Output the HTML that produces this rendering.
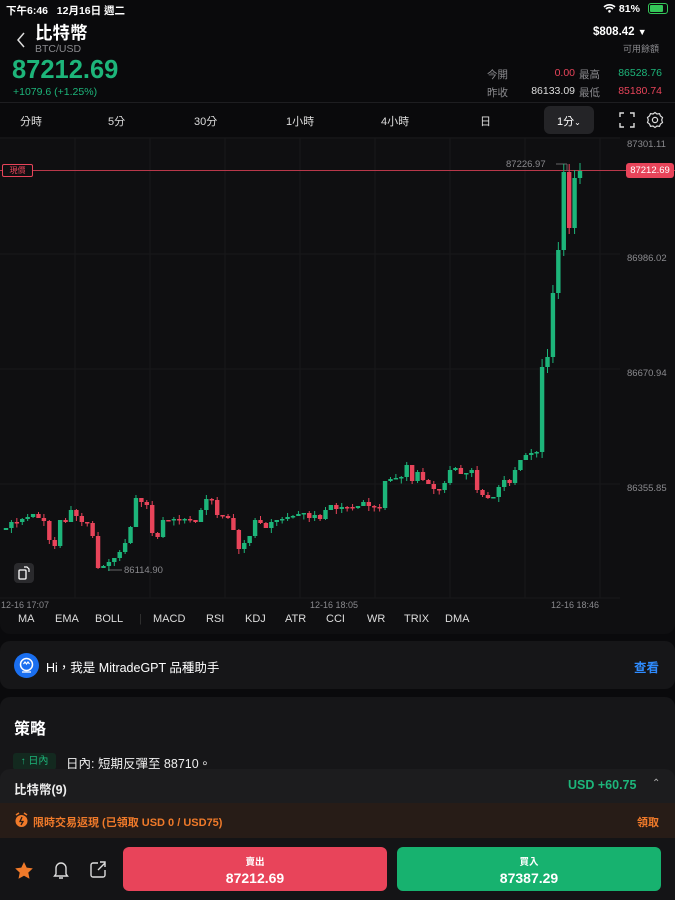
<!DOCTYPE html>
<html><head><meta charset="utf-8">
<style>
*{margin:0;padding:0;box-sizing:border-box}
body{width:675px;height:900px;overflow:hidden;background:#0a0a0c;font-family:"Liberation Sans","Noto Sans CJK TC",sans-serif;color:#fff;position:relative}
.a{position:absolute;white-space:nowrap}
.g{color:#1db57a}.r{color:#e8445a}.gr{color:#8a8a8e}
</style></head><body>
<!-- status -->
<div class="a" style="left:6px;top:3px;font-size:10.5px;font-weight:bold">下午6:46&nbsp;&nbsp; 12月16日 週二</div>
<div class="a" style="left:603px;top:3px;font-size:10.5px;font-weight:bold">
<svg width="13" height="10" viewBox="0 0 13 10" style="vertical-align:-1px"><path d="M1 4a8 8 0 0 1 11 0M3 6a5 5 0 0 1 7 0" stroke="#fff" stroke-width="1.6" fill="none"/><circle cx="6.5" cy="8.3" r="1.3" fill="#fff"/></svg> 81%</div>
<div class="a" style="left:648px;top:3px;width:20px;height:11px;border:1px solid #34c759;border-radius:3px;padding:1px"><div style="width:80%;height:100%;background:#34c759;border-radius:1px"></div></div>
<!-- header -->
<svg class="a" style="left:15px;top:31px" width="12" height="18"><path d="M9 2L3 9l6 7" stroke="#ddd" stroke-width="1.5" fill="none"/></svg>
<div class="a" style="left:35px;top:20px;font-size:17.5px;font-weight:bold">比特幣</div>
<div class="a gr" style="left:35px;top:43px;font-size:10.5px">BTC/USD</div>
<div class="a" style="left:593px;top:26px;font-size:11.5px;font-weight:bold">$808.42 <span style="font-size:9px">▼</span></div>
<div class="a gr" style="left:623px;top:42px;font-size:9px">可用餘額</div>
<div class="a g" style="left:12px;top:56px;font-size:25.5px;font-weight:bold">87212.69</div>
<div class="a g" style="left:13px;top:86px;font-size:10.5px">+1079.6 (+1.25%)</div>
<div class="a gr" style="left:487px;top:67px;font-size:10.5px">今開</div>
<div class="a r" style="right:100px;top:67px;font-size:10.5px">0.00</div>
<div class="a gr" style="left:579px;top:67px;font-size:10.5px">最高</div>
<div class="a g" style="right:13px;top:67px;font-size:10.5px">86528.76</div>
<div class="a gr" style="left:487px;top:85px;font-size:10.5px">昨收</div>
<div class="a" style="right:100px;top:85px;font-size:10.5px;color:#ddd">86133.09</div>
<div class="a gr" style="left:579px;top:85px;font-size:10.5px">最低</div>
<div class="a r" style="right:13px;top:85px;font-size:10.5px">85180.74</div>
<div class="a" style="left:0;top:102px;width:675px;height:1px;background:#1e1e21"></div>
<!-- tabs -->
<div class="a" style="left:544px;top:106px;width:50px;height:28px;background:#242427;border-radius:6px"></div>
<div class="a" style="left:0;top:113px;width:675px;font-size:11px;color:#ddd">
<span class="a" style="left:20px">分時</span><span class="a" style="left:108px">5分</span><span class="a" style="left:194px">30分</span><span class="a" style="left:286px">1小時</span><span class="a" style="left:381px">4小時</span><span class="a" style="left:480px">日</span><span class="a" style="left:557px;color:#fff">1分<span style="font-size:8px">⌄</span></span></div>
<svg class="a" style="left:619px;top:112px" width="16" height="16"><path d="M1 5V1h4M11 1h4v4M15 11v4h-4M5 15H1v-4" stroke="#ddd" stroke-width="1.4" fill="none"/></svg>
<svg class="a" style="left:646px;top:111px" width="18" height="18" viewBox="0 0 18 18"><path d="M9 1.5l2 1.5 2.5-.3 1 2.3 2 1.5-.8 2.5.8 2.5-2 1.5-1 2.3-2.5-.3-2 1.5-2-1.5-2.5.3-1-2.3-2-1.5.8-2.5-.8-2.5 2-1.5 1-2.3 2.5.3z" stroke="#ddd" stroke-width="1.2" fill="none"/><circle cx="9" cy="9" r="2.6" stroke="#ddd" stroke-width="1.2" fill="none"/></svg>
<!-- chart -->
<div class="a" style="left:0;top:137px;width:675px;height:497px;background:#0f0f11;border-radius:0 0 10px 10px"></div>
<svg class="a" id="ch" style="left:0;top:0" width="675" height="640"></svg>
<div class="a" style="left:2px;top:164px;width:31px;height:13px;border:1px solid #e8445a;border-radius:2px;font-size:8px;color:#e8445a;text-align:center;line-height:11px;background:#0f0f11">現價</div>
<div class="a" style="left:626px;top:163px;width:48px;height:15px;background:#e8445a;border-radius:3px;font-size:9.5px;text-align:center;line-height:15px">87212.69</div>
<div class="a gr" style="left:627px;top:139px;font-size:9.5px">87301.11</div>
<div class="a gr" style="left:627px;top:253px;font-size:9.5px">86986.02</div>
<div class="a gr" style="left:627px;top:368px;font-size:9.5px">86670.94</div>
<div class="a gr" style="left:627px;top:483px;font-size:9.5px">86355.85</div>
<div class="a gr" style="left:506px;top:159px;font-size:9.5px">87226.97</div>
<div class="a gr" style="left:124px;top:565px;font-size:9.5px">86114.90</div>
<div class="a" style="left:14px;top:563px;width:20px;height:20px;background:#2a2a2d;border-radius:4px"><svg width="20" height="20"><rect x="5" y="7" width="7" height="9" rx="1" stroke="#fff" stroke-width="1.3" fill="none"/><path d="M10 4h3l2 2v3" stroke="#fff" stroke-width="1.2" fill="none"/></svg></div>
<div class="a gr" style="left:1px;top:600px;font-size:9px">12-16 17:07</div>
<div class="a gr" style="left:310px;top:600px;font-size:9px">12-16 18:05</div>
<div class="a gr" style="left:551px;top:600px;font-size:9px">12-16 18:46</div>
<div class="a" style="left:0;top:613px;font-size:11px;color:#ddd">
<span class="a" style="left:18px">MA</span><span class="a" style="left:55px">EMA</span><span class="a" style="left:95px">BOLL</span><span class="a" style="left:139px;color:#333">|</span><span class="a" style="left:153px">MACD</span><span class="a" style="left:206px">RSI</span><span class="a" style="left:245px">KDJ</span><span class="a" style="left:285px">ATR</span><span class="a" style="left:326px">CCI</span><span class="a" style="left:367px">WR</span><span class="a" style="left:404px">TRIX</span><span class="a" style="left:445px">DMA</span></div>
<!-- GPT -->
<div class="a" style="left:0;top:641px;width:675px;height:48px;background:#161618;border-radius:10px"></div>
<div class="a" style="left:14px;top:653px;width:25px;height:25px;border-radius:50%;background:#1a6ff0"><svg width="25" height="25"><circle cx="12.5" cy="11.5" r="6" stroke="#fff" stroke-width="1.5" fill="none"/><path d="M8 19h9M9.5 11l1.5-2 1.5 2 1.5-2 1.5 2" stroke="#fff" stroke-width="1.2" fill="none"/></svg></div>
<div class="a" style="left:46px;top:657px;font-size:12.5px">Hi，我是 MitradeGPT 品種助手</div>
<div class="a" style="left:634px;top:657px;font-size:12.5px;color:#2f8cff;font-weight:bold">查看</div>
<!-- strategy -->
<div class="a" style="left:0;top:697px;width:675px;height:100px;background:#161618;border-radius:10px"></div>
<div class="a" style="left:14px;top:715px;font-size:16px;font-weight:bold">策略</div>
<div class="a g" style="left:13px;top:753px;width:43px;height:17px;background:#13291f;border-radius:3px;font-size:10px;text-align:center;line-height:17px">↑ 日內</div>
<div class="a" style="left:66px;top:753px;font-size:12.5px;color:#eee">日內: 短期反彈至 88710。</div>
<!-- bottom sheet -->
<div class="a" style="left:0;top:769px;width:675px;height:35px;background:#1c1c1e;border-radius:10px 10px 0 0"></div>
<div class="a" style="left:14px;top:779px;font-size:12.5px;font-weight:bold;color:#eee">比特幣(9)</div>
<div class="a g" style="left:568px;top:778px;font-size:12.5px;font-weight:bold">USD +60.75</div>
<div class="a" style="left:652px;top:778px;font-size:10px;color:#aaa">⌃</div>
<div class="a" style="left:0;top:803px;width:675px;height:35px;background:#271c17"></div>
<svg class="a" style="left:14px;top:812px" width="15" height="16"><circle cx="7.5" cy="9" r="6" fill="#f07a2a"/><path d="M2 3l3-2M13 3l-3-2" stroke="#f07a2a" stroke-width="1.6"/><path d="M8 5L6 9.5h3L7 13" stroke="#271c17" stroke-width="1.3" fill="none"/></svg>
<div class="a" style="left:33px;top:814px;font-size:11px;color:#f07a2a;font-weight:bold">限時交易返現 (已領取 USD 0 / USD75)</div>
<div class="a" style="left:637px;top:814px;font-size:11px;color:#f07a2a;font-weight:bold">領取</div>
<div class="a" style="left:0;top:838px;width:675px;height:62px;background:#141416"></div>
<svg class="a" style="left:14px;top:861px" width="20" height="19" viewBox="0 0 20 19"><path d="M10 1l2.7 5.6 6.1.8-4.5 4.2 1.2 6.1L10 14.7l-5.5 3 1.2-6.1L1.2 7.4l6.1-.8z" fill="#f07a2a"/></svg>
<svg class="a" style="left:52px;top:860px" width="18" height="20"><path d="M4 14V8a5 5 0 0 1 10 0v6l1.5 2h-13zM7 18h4" stroke="#ddd" stroke-width="1.4" fill="none"/></svg>
<svg class="a" style="left:89px;top:860px" width="18" height="19"><path d="M9 3H4a2 2 0 0 0-2 2v10a2 2 0 0 0 2 2h10a2 2 0 0 0 2-2v-5M9 10l7-7M11 2h5v5" stroke="#ddd" stroke-width="1.4" fill="none"/></svg>
<div class="a" style="left:123px;top:847px;width:264px;height:44px;background:#e8445a;border-radius:6px;text-align:center"><div style="font-size:9.5px;margin-top:7px;font-weight:bold">賣出</div><div style="font-size:14px;font-weight:bold;margin-top:2px">87212.69</div></div>
<div class="a" style="left:397px;top:847px;width:264px;height:44px;background:#17b26f;border-radius:6px;text-align:center"><div style="font-size:9.5px;margin-top:7px;font-weight:bold">買入</div><div style="font-size:14px;font-weight:bold;margin-top:2px">87387.29</div></div>
<script>
var s='';
function L(x1,y1,x2,y2,c,w){s+='<line x1="'+x1+'" y1="'+y1+'" x2="'+x2+'" y2="'+y2+'" stroke="'+c+'" stroke-width="'+(w||1)+'"/>';}
for(var x=75;x<=600;x+=75)L(x,138,x,598,'#18181b');
[138,254,369,484,598].forEach(function(y){L(0,y,620,y,'#18181b');});
L(0,170.5,675,170.5,'#b8384a');
L(556,164,567,164,'#666');L(567,164,567,171,'#666');
L(108,570,122,570,'#666');
var c=[528,522,522,519,517,514,518,521,540,546,520,522,510,516,522,523,536,568,566,562,558,552,543,527,498,502,505,533,537,520,520,519,520,519,520,522,510,499,500,515,516,518,530,549,543,536,520,523,528,522,520,519,517,516,514,513,518,515,519,510,505,509,507,507,508,506,502,506,507,508,481,479,478,477,465,481,472,480,484,489,490,483,470,468,474,473,470,490,495,498,497,487,480,483,470,460,455,453,452,367,357,293,250,172,228,178,171];
var n=c.length,x0=6,dx=(580-x0)/(n-1),p=530;
for(var i=0;i<n;i++){var x=x0+i*dx,o=p,cl=c[i],up=cl<o,col=up?'#1db57a':'#e8445a';
var t=Math.min(o,cl),b=Math.max(o,cl);if(b-t<1.5)b=t+1.5;
var hi=t-((i*7)%5),lo=b+((i*11)%6);
if(i>=99){hi=t-8;lo=b+6;}
L(x,hi,x,lo,col);s+='<rect x="'+(x-2.2)+'" y="'+t+'" width="4.4" height="'+(b-t)+'" fill="'+col+'"/>';p=cl;}
document.getElementById('ch').innerHTML=s;
</script>
</body></html>
